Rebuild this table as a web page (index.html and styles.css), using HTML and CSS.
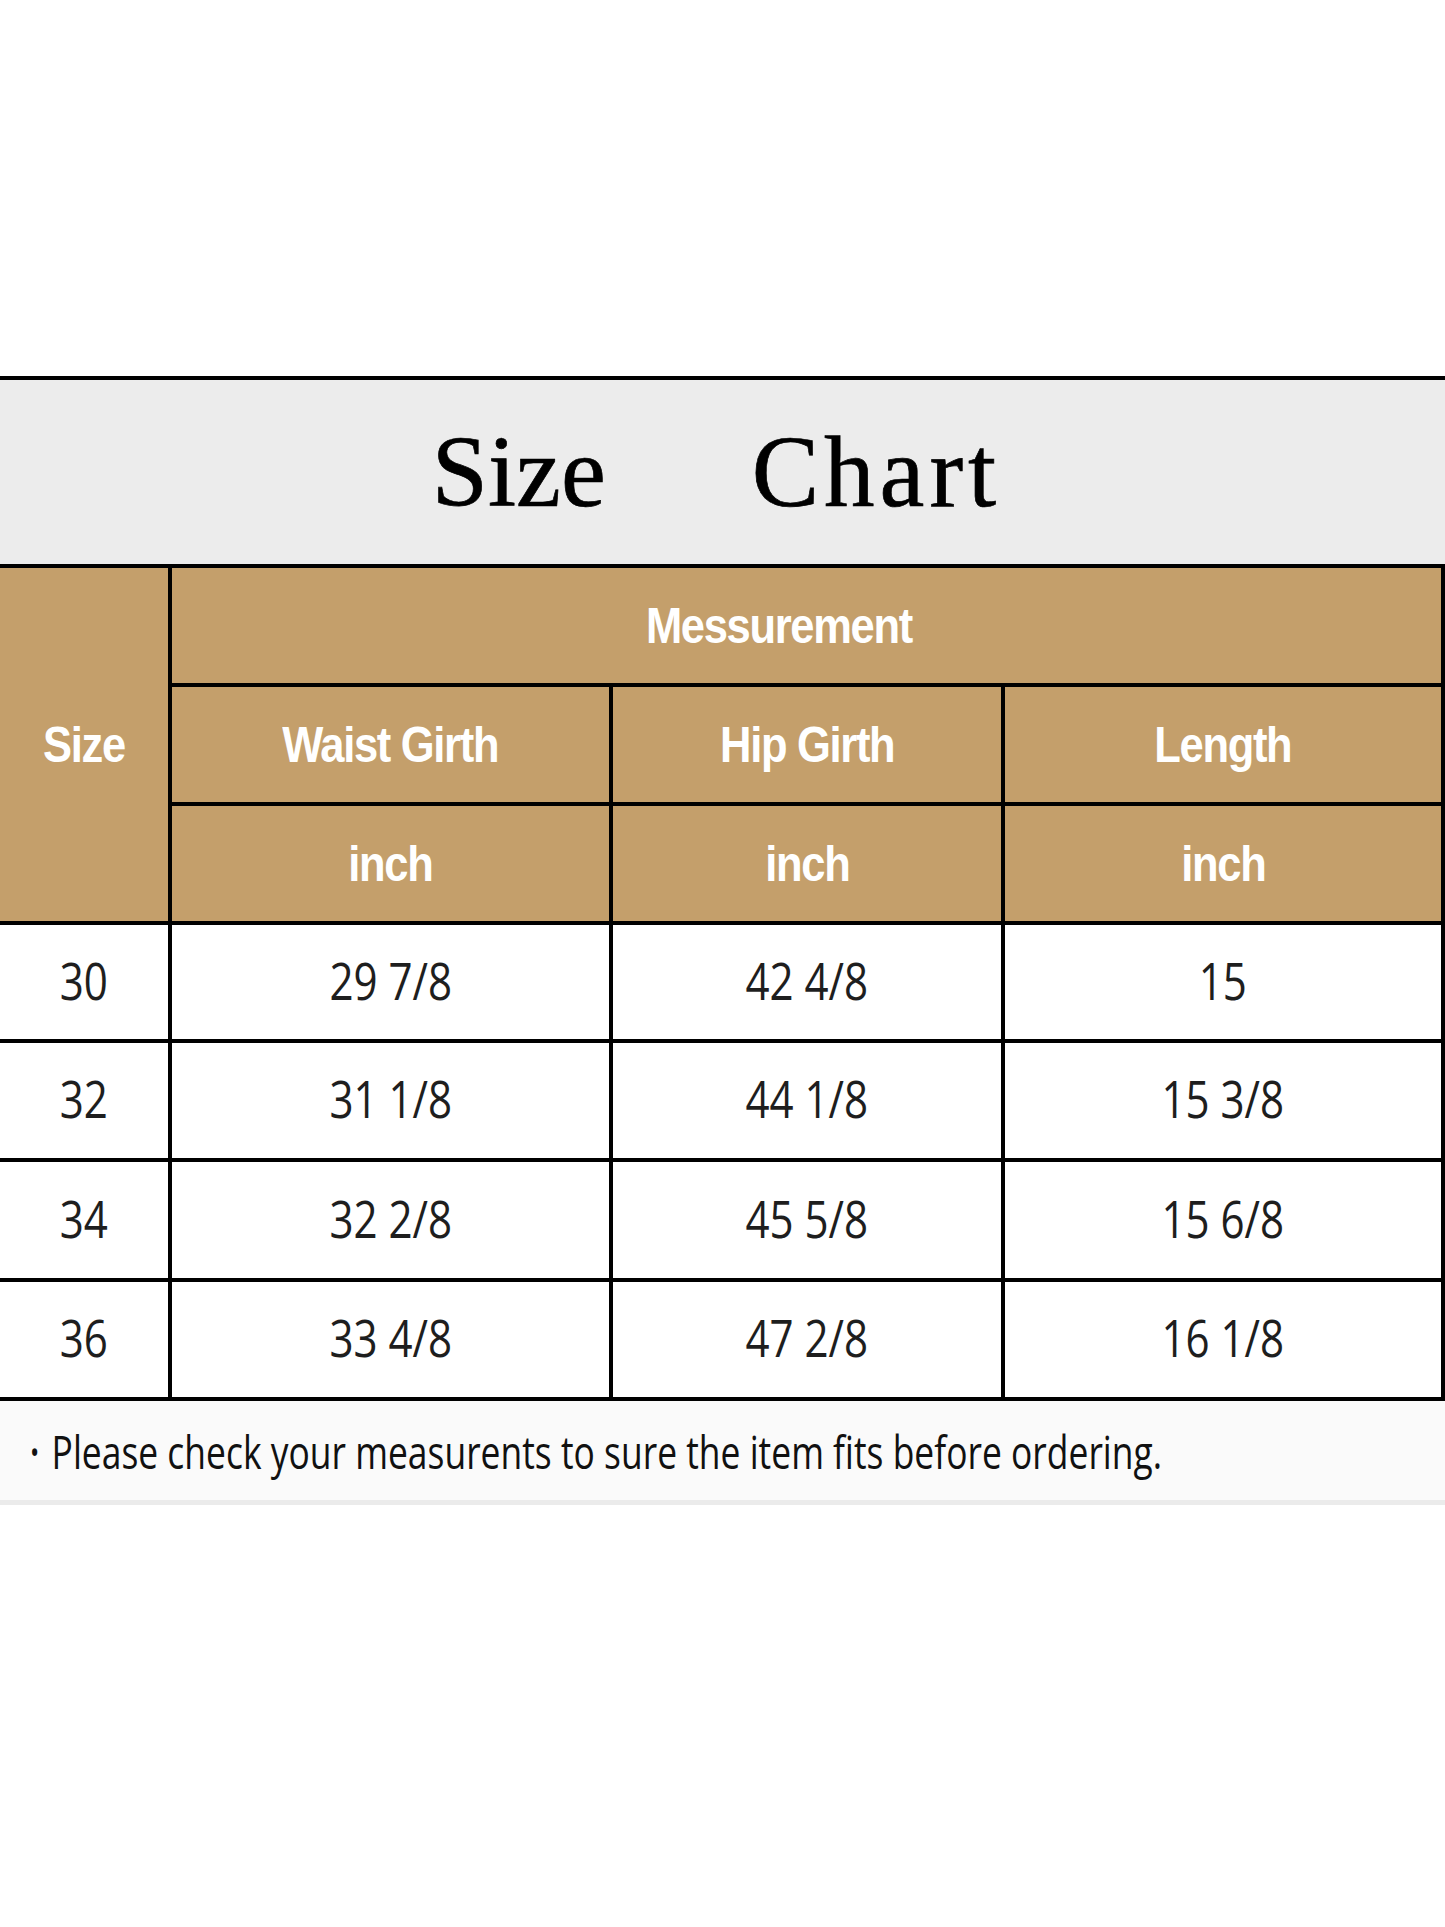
FILE: index.html
```html
<!DOCTYPE html>
<html lang="en">
<head>
<meta charset="utf-8">
<title>Size Chart</title>
<link rel="stylesheet" href="styles.css">
</head>
<body>
<section class="chart">
  <header class="title-band">
    <span class="title-word">Size</span>
    <span class="title-word title-wide">Chart</span>
  </header>
  <div class="grid">
    <div class="cell head size-head"><span class="txt">Size</span></div>
    <div class="cell head span-measure"><span class="txt">Messurement</span></div>
    <div class="cell head"><span class="txt">Waist Girth</span></div>
    <div class="cell head"><span class="txt">Hip Girth</span></div>
    <div class="cell head"><span class="txt">Length</span></div>
    <div class="cell head"><span class="txt">inch</span></div>
    <div class="cell head"><span class="txt">inch</span></div>
    <div class="cell head"><span class="txt">inch</span></div>

    <div class="cell data"><span class="txt">30</span></div>
    <div class="cell data"><span class="txt">29 7/8</span></div>
    <div class="cell data"><span class="txt">42 4/8</span></div>
    <div class="cell data"><span class="txt">15</span></div>

    <div class="cell data"><span class="txt">32</span></div>
    <div class="cell data"><span class="txt">31 1/8</span></div>
    <div class="cell data"><span class="txt">44 1/8</span></div>
    <div class="cell data"><span class="txt">15 3/8</span></div>

    <div class="cell data"><span class="txt">34</span></div>
    <div class="cell data"><span class="txt">32 2/8</span></div>
    <div class="cell data"><span class="txt">45 5/8</span></div>
    <div class="cell data"><span class="txt">15 6/8</span></div>

    <div class="cell data"><span class="txt">36</span></div>
    <div class="cell data"><span class="txt">33 4/8</span></div>
    <div class="cell data"><span class="txt">47 2/8</span></div>
    <div class="cell data"><span class="txt">16 1/8</span></div>
  </div>
  <footer class="note">
    <span class="note-text"><span class="bullet">•</span>Please check your measurents to sure the item fits before ordering.</span>
  </footer>
</section>
</body>
</html>
```
FILE: styles.css
```css
* { box-sizing: border-box; }

html, body {
  margin: 0;
  padding: 0;
  background: #ffffff;
}

body {
  width: 1445px;
  min-height: 1927px;
}

.chart {
  margin-top: 376px;
}

.title-band {
  border-top: 4px solid #000;
  background: #ececec;
  height: 188px;
  display: flex;
  justify-content: center;
  align-items: center;
  gap: 146px;
  padding-right: 17px;
  font-family: "Liberation Serif", "DejaVu Serif", serif;
  font-size: 101px;
  color: #000;
  -webkit-text-stroke: 0.7px #000;
}

.title-word {
  line-height: 1;
}

.title-wide {
  letter-spacing: 5px;
  margin-right: -5px;
}

.grid {
  display: grid;
  grid-template-columns: 168px 437px 388px 436px;
  grid-template-rows: 115px 115px 115px 114px 115px 116px 115px;
  gap: 4px;
  background: #000;
  padding: 4px 4px 4px 0;
}

.cell {
  display: flex;
  align-items: center;
  justify-content: center;
  white-space: nowrap;
}

.txt {
  display: inline-block;
}

.head {
  background: #c49f6b;
  color: #ffffff;
  font-family: "Liberation Sans", Arial, sans-serif;
  font-weight: 700;
  font-size: 50px;
  letter-spacing: -1.5px;
}

.head .txt {
  transform: scaleX(0.87);
}

.size-head {
  grid-row: 1 / span 3;
}

.span-measure {
  grid-column: 2 / span 3;
  padding-right: 56px;
}

.data {
  background: #ffffff;
  color: #1e1e1e;
  font-family: "Open Sans", "Noto Sans", sans-serif;
  font-size: 52px;
  padding-bottom: 6px;
}

.data .txt {
  transform: scaleX(0.81);
}

.note {
  height: 104px;
  background: #fafafa;
  border-bottom: 5px solid #ebebeb;
  display: flex;
  align-items: center;
  padding-left: 30px;
  font-family: "Open Sans", "Noto Sans", sans-serif;
  font-size: 46px;
  color: #111;
}

.note-text {
  display: inline-block;
  white-space: nowrap;
  transform: scaleX(0.77);
  transform-origin: left center;
}

.bullet {
  font-size: 32px;
  margin-right: 16px;
  vertical-align: 5px;
}
```
